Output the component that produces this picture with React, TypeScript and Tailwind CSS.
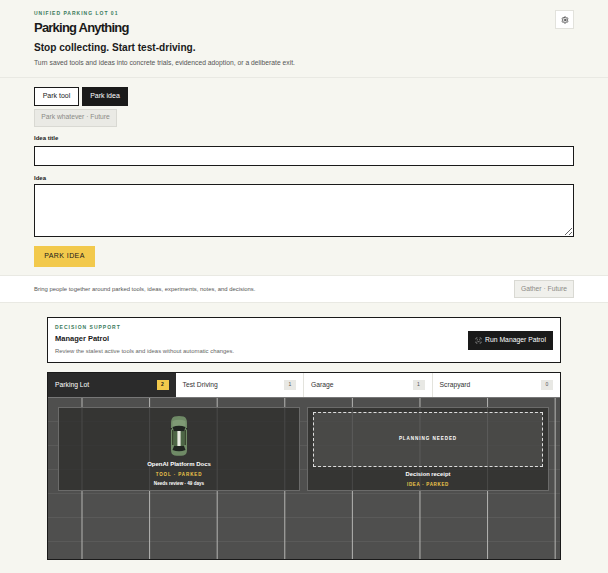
import { ScanFace, Settings } from "lucide-react";

function Car() {
  return (
    <svg width="18" height="40" viewBox="0 0 18 40" className="block">
      <path d="M4.5 0.5 Q9 -0.3 13.5 0.5 Q17 1.5 17 7 L17 34 Q17 38.5 13.5 39.5 Q9 40 4.5 39.5 Q1 38.5 1 34 L1 7 Q1 1.5 4.5 0.5 Z" fill="#6f8a66" />
      <path d="M2.5 5 Q9 2.5 15.5 5 L15.5 12 L2.5 12 Z" fill="#7f9a75" />
      <path d="M2.5 11 Q9 8.5 15.5 11 L14 15.5 L4 15.5 Z" fill="#1f2420" />
      <path d="M4 15.5 L14 15.5 L14 30 L4 30 Z" fill="#4d6646" />
      <path d="M4 30 L14 30 L15.5 34 Q9 36.5 2.5 34 Z" fill="#1f2420" />
      <rect x="2" y="14" width="1.6" height="15" fill="#38472f" />
      <rect x="14.4" y="14" width="1.6" height="15" fill="#38472f" />
      <rect x="7.4" y="15" width="3.2" height="15" fill="#e9ebe3" />
      <rect x="0" y="12" width="2" height="1.4" fill="#2a2f28" />
      <rect x="16" y="12" width="2" height="1.4" fill="#2a2f28" />
    </svg>
  );
}

function Tab({ label, count, active }: { label: string; count: number; active?: boolean }) {
  return (
    <div
      className={
        active
          ? "flex flex-1 items-center justify-between bg-[#2b2b2b] px-[7px] text-[6.75px] text-white"
          : "flex flex-1 items-center justify-between border-r border-[#e3e3dd] bg-white px-[7px] text-[6.75px] text-[#333] last:border-r-0"
      }
    >
      <span>{label}</span>
      <span
        className={
          active
            ? "flex h-[10px] w-[12px] items-center justify-center bg-[#f2c94c] text-[5px] font-bold text-[#1a1a1a]"
            : "flex h-[10px] w-[12px] items-center justify-center bg-[#e8e8e4] text-[5px] text-[#555]"
        }
      >
        {count}
      </span>
    </div>
  );
}

export default function App() {
  return (
    <div className="h-[573px] overflow-hidden bg-[#f6f6f0] font-['Liberation_Sans',Arial,sans-serif] text-[#1a1a1a]">
      {/* Header */}
      <header className="flex h-[78px] items-start justify-between border-b border-[#e9e9e3] pl-[34px] pr-[34px] pt-[10px]">
        <div>
          <p className="text-[5px] leading-[7px] font-bold tracking-[0.2em] text-[#3a7a5c]">UNIFIED PARKING LOT 01</p>
          <h1 className="mt-[2px] text-[13px] leading-[18px] font-bold tracking-[-0.06em]">Parking Anything</h1>
          <h2 className="mt-[4px] text-[10.1px] leading-[14px] font-bold">Stop collecting. Start test-driving.</h2>
          <p className="mt-[2px] text-[6.75px] leading-[12px] text-[#555]">
            Turn saved tools and ideas into concrete trials, evidenced adoption, or a deliberate exit.
          </p>
        </div>
        <button className="flex h-[19px] w-[19px] items-center justify-center border border-[#e2e2dc] bg-white">
          <Settings size={8} strokeWidth={2} />
        </button>
      </header>

      {/* Form */}
      <section className="flex h-[197px] flex-col px-[34px] pt-[9px]">
        <div className="flex gap-[3px]">
          <button className="h-[18.5px] w-[45px] border border-[#1a1a1a] bg-white text-[7px]">Park tool</button>
          <button className="h-[18.5px] w-[46px] border border-[#1a1a1a] bg-[#1a1a1a] text-[7px] text-white">Park idea</button>
        </div>
        <button className="mt-[3px] h-[18px] w-[83px] border border-[#d9d9d3] bg-[#eaeae5] text-[6.75px] text-[#8a8a85]">
          Park whatever · Future
        </button>
        <label className="mt-[7px] text-[6px] leading-[8px] font-bold">Idea title</label>
        <input className="mt-[4px] h-[20px] w-full border border-[#1a1a1a] bg-white outline-none" />
        <label className="mt-[8px] text-[6px] leading-[8px] font-bold">Idea</label>
        <textarea className="mt-[2px] h-[53px] w-full border border-[#1a1a1a] bg-white outline-none" />
        <button className="mt-[9px] h-[21px] w-[61px] bg-[#f2c94c] text-[7px] font-medium tracking-[0.06em] text-[#1a1a1a]">
          PARK IDEA
        </button>
      </section>

      {/* Gather */}
      <section className="flex h-[28px] items-center justify-between border-y border-[#e9e9e3] bg-white px-[34px]">
        <p className="text-[5.9px] text-[#555]">Bring people together around parked tools, ideas, experiments, notes, and decisions.</p>
        <button className="h-[18px] w-[60px] border border-[#d9d9d3] bg-[#f0f0ec] text-[6.75px] text-[#8a8a85]">Gather · Future</button>
      </section>

      <main className="mx-[47px] mt-[14px]">
        {/* Manager Patrol */}
        <section className="flex h-[46px] items-center justify-between border border-[#1a1a1a] bg-white pl-[7px] pr-[7px]">
          <div>
            <p className="text-[5px] leading-[7px] font-bold tracking-[0.2em] text-[#3a7a5c]">DECISION SUPPORT</p>
            <h3 className="mt-[2px] text-[7.5px] leading-[12px] font-bold">Manager Patrol</h3>
            <p className="mt-[1px] text-[5.9px] leading-[10px] text-[#666]">
              Review the stalest active tools and ideas without automatic changes.
            </p>
          </div>
          <button className="flex h-[19px] w-[85px] items-center justify-center gap-[3px] bg-[#1a1a1a] text-[6.8px] text-white">
            <ScanFace size={7} strokeWidth={1.5} />
            Run Manager Patrol
          </button>
        </section>

        {/* Lot */}
        <section className="mt-[9px] w-[514px] border border-[#1a1a1a]">
          <div className="flex h-[24px]">
            <Tab label="Parking Lot" count={2} active />
            <Tab label="Test Driving" count={1} />
            <Tab label="Garage" count={1} />
            <Tab label="Scrapyard" count={0} />
          </div>
          <div className="grid h-[162px] grid-cols-2 items-start gap-[7px] border-t border-[#777] bg-[#4f4f4e] bg-[linear-gradient(90deg,#b4b4b2_1px,transparent_1px),linear-gradient(180deg,#5a5a59_1px,transparent_1px)] bg-[size:67.6px_100%,100%_24px] bg-[position:33.5px_0,0_-1px] pl-[10px] pr-[11px] pt-[9px]">
            <div className="flex h-[84px] flex-col items-center border border-[#6b6b6a] bg-[#2e2e2d]/80 pt-[8px] text-white">
              <Car />
              <p className="mt-[4px] text-[6px] leading-[9px] font-bold">OpenAI Platform Docs</p>
              <p className="mt-[1px] text-[4.5px] leading-[9px] font-bold tracking-[0.2em] text-[#f2c94c]">TOOL · PARKED</p>
              <p className="text-[4.6px] leading-[9px] font-bold">Needs review · 49 days</p>
            </div>
            <div className="flex h-[84px] flex-col items-center border border-[#6b6b6a] bg-[#2e2e2d]/80 px-[5px] pt-[4px] text-white">
              <div className="flex h-[55px] w-full items-center justify-center border border-dashed border-[#ddd] bg-white/10">
                <span className="text-[4.6px] font-bold tracking-[0.2em]">PLANNING NEEDED</span>
              </div>
              <p className="mt-[2px] text-[5.8px] leading-[10px] font-bold">Decision receipt</p>
              <p className="mt-[1px] text-[4.5px] leading-[9px] font-bold tracking-[0.15em] text-[#f2c94c]">IDEA · PARKED</p>
            </div>
          </div>
        </section>
      </main>
    </div>
  );
}
